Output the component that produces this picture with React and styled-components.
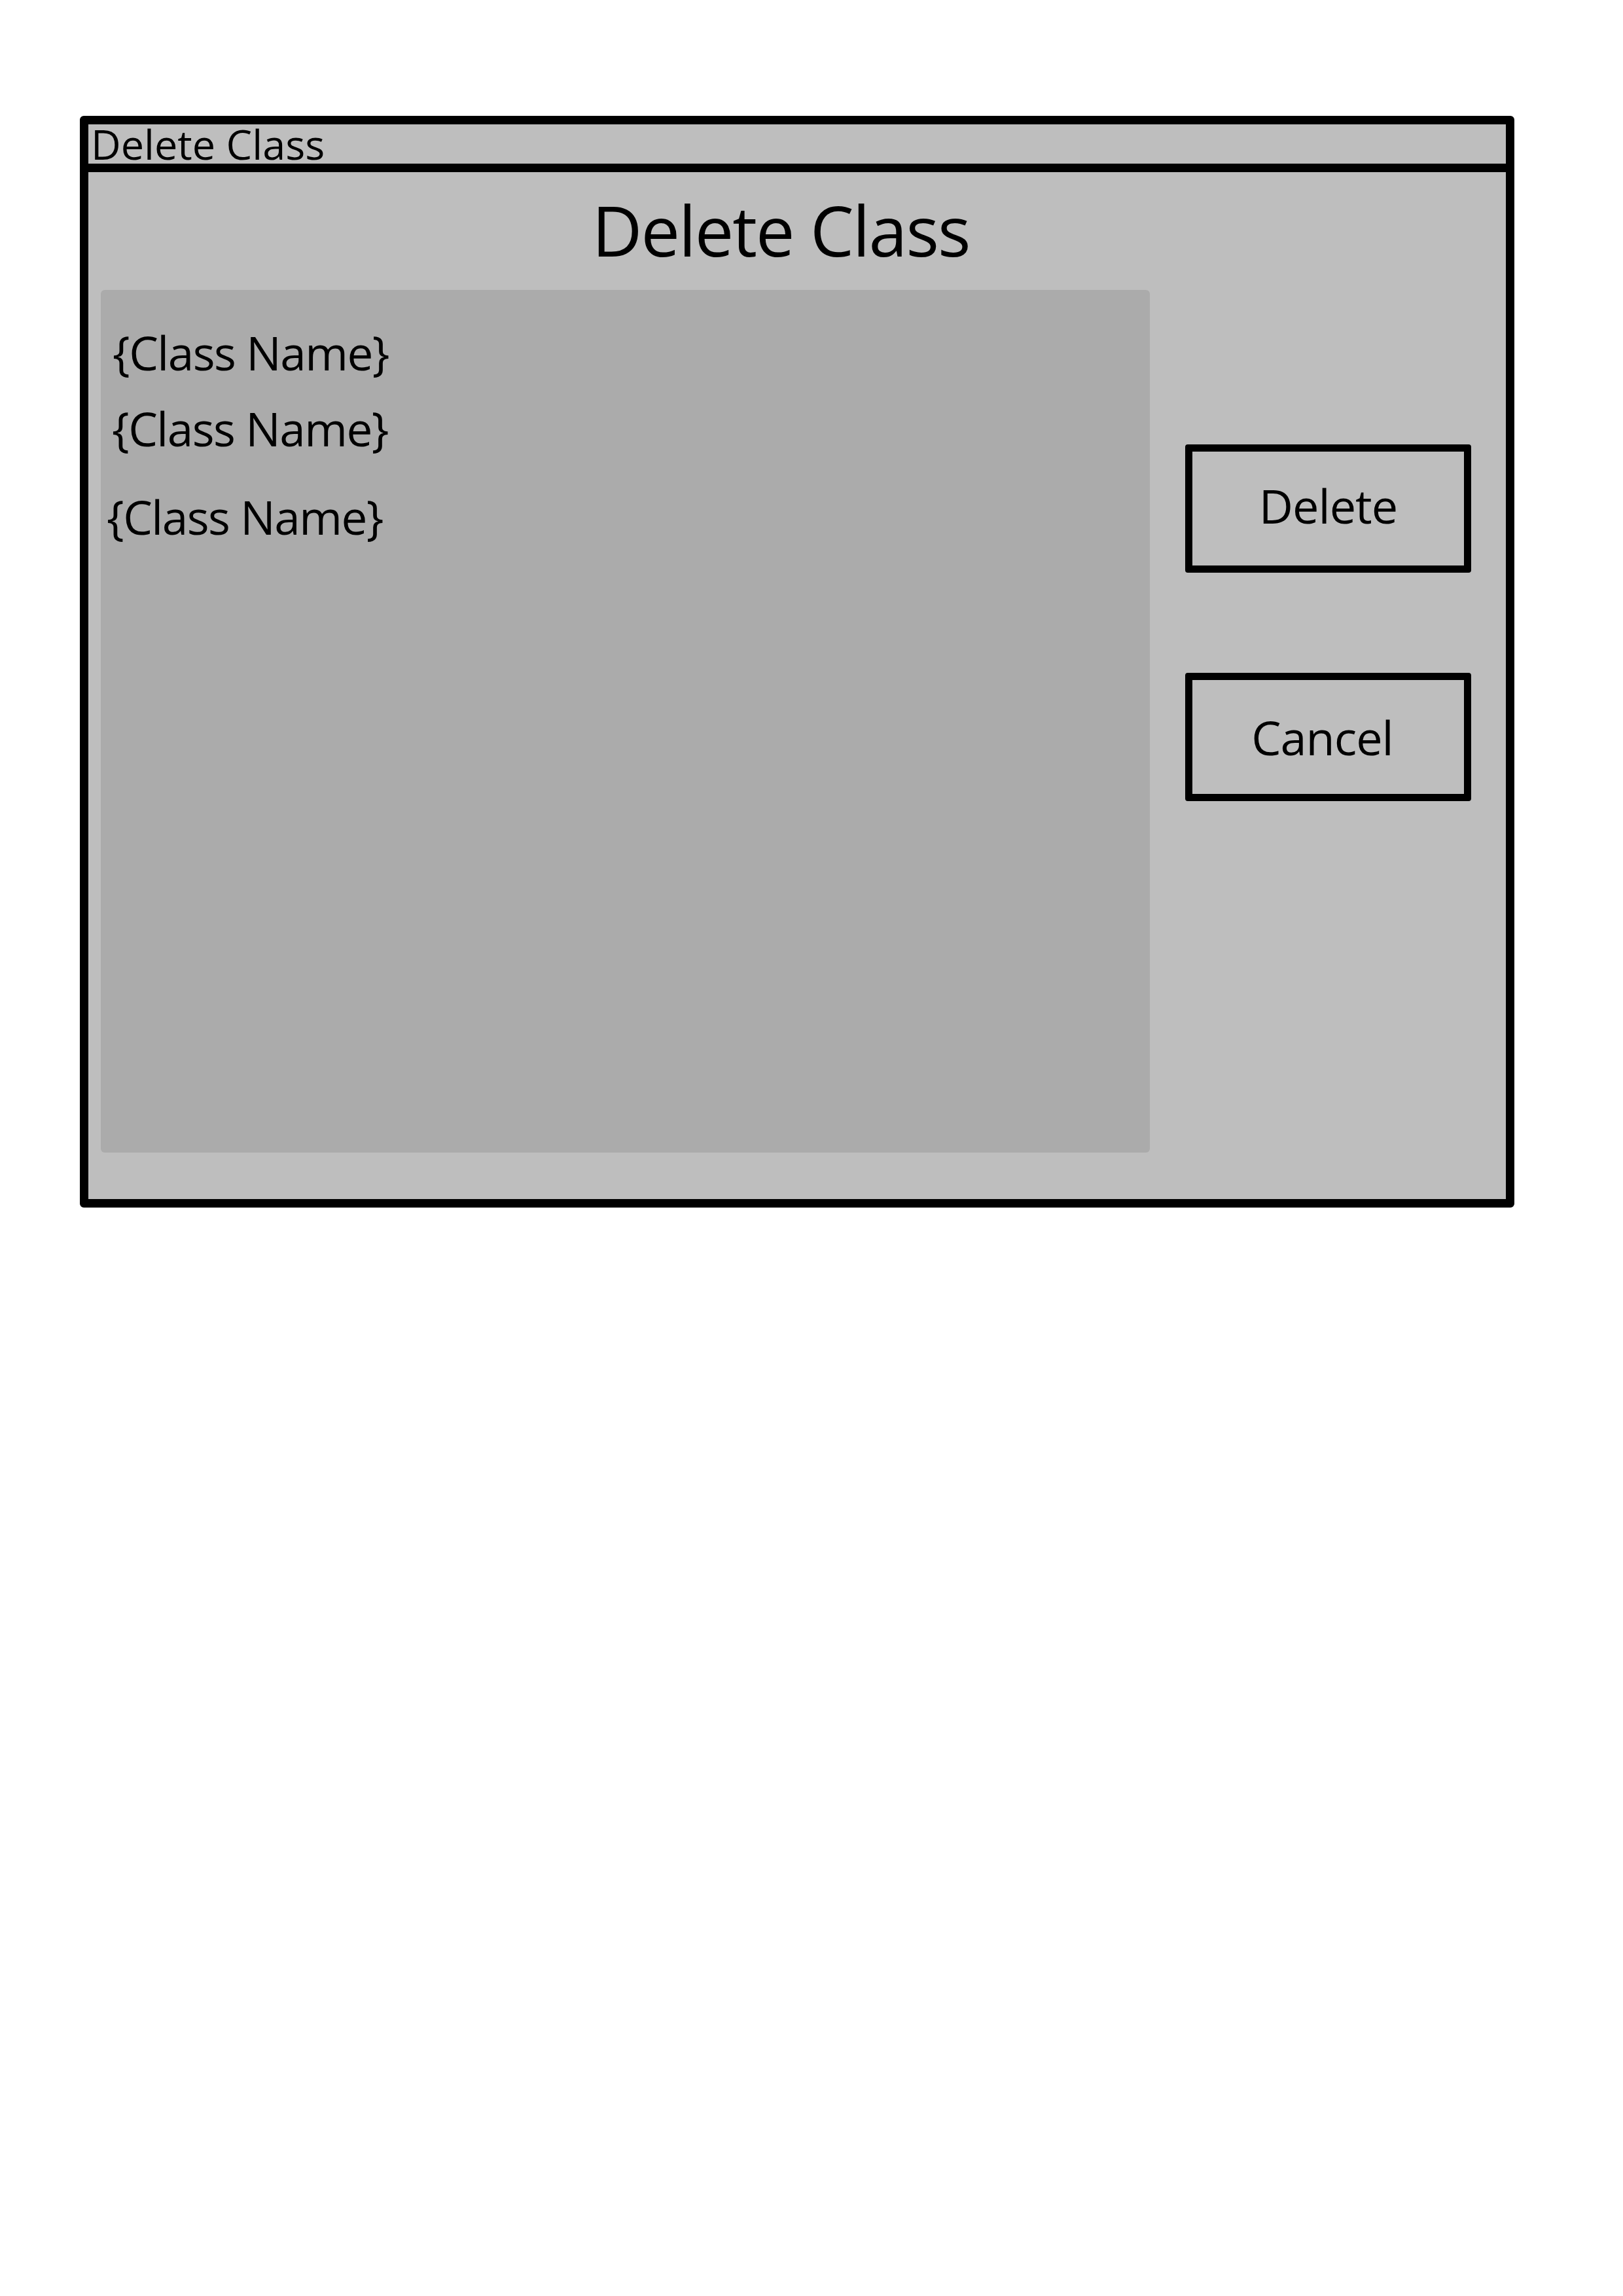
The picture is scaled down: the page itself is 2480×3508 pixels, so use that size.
import React from "react";
import styled, { createGlobalStyle } from "styled-components";

const classes = [
  { name: "{Class Name}", indent: 18, top: 0 },
  { name: "{Class Name}", indent: 17, top: 44 },
  { name: "{Class Name}", indent: 9, top: 63 },
];

export default function App() {
  return (
    <>
      <GlobalStyle />
      <Page>
        <Dialog>
          <TitleBar>Delete Class</TitleBar>
          <Body>
            <Heading>Delete Class</Heading>
            <ClassList>
              {classes.map((c, i) => (
                <ClassItem key={i} $indent={c.indent} $top={c.top}>
                  {c.name}
                </ClassItem>
              ))}
            </ClassList>
            <Actions>
              <ActionButton $lift={10}>Delete</ActionButton>
              <ActionButton $shiftLeft={18}>Cancel</ActionButton>
            </Actions>
          </Body>
        </Dialog>
      </Page>
    </>
  );
}

const GlobalStyle = createGlobalStyle`
  body {
    margin: 0;
    background: #ffffff;
    font-family: "Open Sans", "Noto Sans", sans-serif;
    color: #000000;
  }
`;

const Page = styled.div`
  width: 2480px;
  height: 3508px;
  padding: 177px 0 0 122px;
  box-sizing: border-box;
`;

const Dialog = styled.div`
  width: 2192px;
  height: 1668px;
  box-sizing: border-box;
  border: 13px solid #000;
  border-radius: 6px;
  background: #bebebe;
  display: flex;
  flex-direction: column;
`;

const TitleBar = styled.div`
  height: 60px;
  border-bottom: 13px solid #000;
  padding-left: 4px;
  font-size: 63px;
  line-height: 60px;
  letter-spacing: 0;
  white-space: nowrap;
`;

const Body = styled.div`
  flex: 1;
  display: grid;
  grid-template-columns: 1603px 437px;
  grid-template-rows: auto 1fr;
  column-gap: 54px;
  row-gap: 39px;
  padding: 35px 52px 71px 19px;
`;

const Heading = styled.h1`
  grid-column: 1 / -1;
  margin: 0;
  font-size: 106px;
  font-weight: 400;
  line-height: 1;
  letter-spacing: -2px;
  text-align: center;
  padding-right: 16px;
`;

const ClassList = styled.div`
  background: #ababab;
  border-radius: 6px;
  padding-top: 60px;
  display: flex;
  flex-direction: column;
`;

const ClassItem = styled.div`
  font-size: 71px;
  line-height: 72px;
  letter-spacing: -1.5px;
  margin-left: ${({ $indent }) => $indent}px;
  margin-top: ${({ $top }) => $top}px;
`;

const Actions = styled.div`
  display: flex;
  flex-direction: column;
  gap: 153px;
  padding-top: 236px;
`;

const ActionButton = styled.button`
  height: 196px;
  box-sizing: border-box;
  border: 11px solid #000;
  border-radius: 4px;
  background: transparent;
  font-family: "Open Sans", "Noto Sans", sans-serif;
  font-size: 72px;
  letter-spacing: -1px;
  color: #000;
  display: flex;
  align-items: center;
  justify-content: center;
  padding: 0 ${({ $shiftLeft }) => $shiftLeft || 0}px ${({ $lift }) => $lift || 0}px 0;
`;
